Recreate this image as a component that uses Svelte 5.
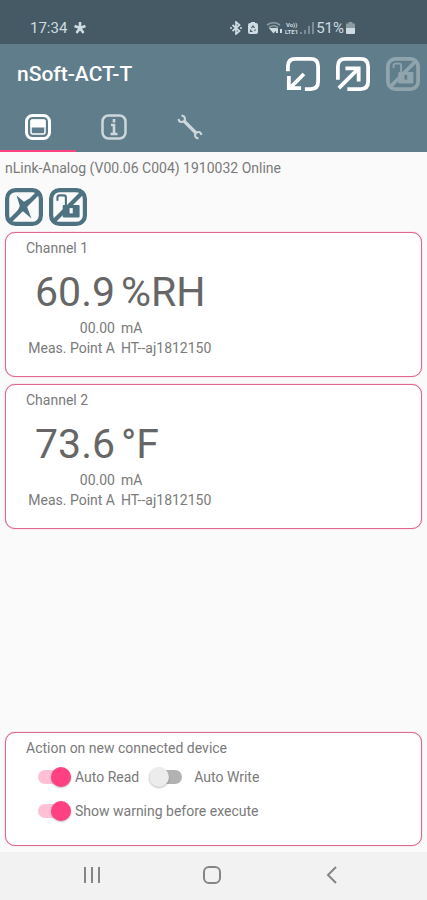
<script>
  let tab = $state('channels');
  let autoRead = $state(true);
  let autoWrite = $state(false);
  let showWarning = $state(true);

  const channels = [
    { name: 'Channel 1', value: '60.9', unit: '%RH' },
    { name: 'Channel 2', value: '73.6', unit: '°F' }
  ];
</script>

{#snippet lockOff()}
  <rect x="2" y="2" width="32" height="32" rx="8" stroke-width="4" />
  <path d="M4 32 32 4" stroke-width="4" />
  <path d="M8 12V9q0-2 2-2h4q2 0 2 2v8" stroke-width="2" />
  <rect x="13" y="16" width="16" height="12" rx="1" fill="currentColor" stroke="none" />
  <path class="keyhole" d="M21 19v5" stroke-width="3" />
{/snippet}

<div class="screen">
  <div class="status">
    <time>17:34</time>
    <svg width="14" height="14" viewBox="0 0 14 14" fill="none" stroke="currentColor" stroke-width="2.600">
      <path d="M7 7V1M7 7l5.500-2M7 7l3.500 5M7 7l-3.500 5M7 7 1.500 5" />
    </svg>
    <div class="tray">
      <svg width="12" height="14" viewBox="0 0 12 14" fill="none" stroke="currentColor" stroke-width="1.700">
        <path d="m2.500 4 7 6L6 13V1l3.500 3-7 6M0 7h2M10 7h2" />
      </svg>
      <svg class="saver" width="10" height="14" viewBox="0 0 10 14">
        <path d="M3 1h4v1h1q2 0 2 2v7q0 2-2 2H2q-2 0-2-2V4q0-2 2-2h1z" fill="currentColor" />
        <path d="M3.500 7 5 5l1.500 2M7.500 8.500 6.500 10M4.500 10.500h-2l.5-2" fill="none" stroke="#455a64" stroke-width="1.200" />
      </svg>
      <svg width="17" height="14" viewBox="0 0 17 14" fill="none" stroke="currentColor">
        <path d="M1 4q6.500-4.500 13 0M3 6.500q4.500-3.500 9 0" stroke-width="1.600" opacity=".5" />
        <path d="m5 8 2.500 3L10 8zM11 12V8M15 8v4" stroke-width="2" />
      </svg>
      <span class="lte"><span>Vo))</span><span>LTE1</span></span>
      <svg width="14" height="14" viewBox="0 0 14 14" fill="none" stroke="currentColor" stroke-width="1.600" opacity=".5">
        <path d="M1 13v-2M5 13V9M9 13V5M13 13V1" />
      </svg>
      <span>51%</span>
      <svg width="9" height="14" viewBox="0 0 9 14">
        <path d="M2.500 1h4v1.500H9V7H0V2.500h2.500z" fill="currentColor" opacity=".5" />
        <path d="M0 7h9v5q0 1-1 1H1q-1 0-1-1z" fill="currentColor" />
      </svg>
    </div>
  </div>

  <header>
    <div class="toolbar">
      <h1>nSoft-ACT-T</h1>
      <button aria-label="Read from device">
        <svg width="34" height="34" viewBox="0 0 36 36" fill="none" stroke="currentColor" stroke-width="4">
          <path d="M2 15v-5q0-8 8-8h16q8 0 8 8v16q0 8-8 8h-6" />
          <path d="M19 18 5 32M3 20v13h13" />
        </svg>
      </button>
      <button aria-label="Write to device">
        <svg width="34" height="34" viewBox="0 0 36 36" fill="none" stroke="currentColor" stroke-width="4">
          <path d="M2 24V10q0-8 8-8h16q8 0 8 8v16q0 8-8 8H12" />
          <path d="M3 33 24 12M10 12h14v14" />
        </svg>
      </button>
      <button class="locked" aria-label="Lock" disabled>
        <svg width="34" height="34" viewBox="0 0 36 36" fill="none" stroke="currentColor">
          {@render lockOff()}
        </svg>
      </button>
    </div>
    <nav class="tabs">
      <button class:active={tab === 'channels'} aria-label="Channels" onclick={() => (tab = 'channels')}>
        <svg width="26" height="26" viewBox="0 0 26 26" fill="none" stroke="currentColor">
          <rect x="1.500" y="1.500" width="23" height="23" rx="6" stroke-width="3" />
          <rect x="6" y="6" width="14" height="14" rx="2" stroke-width="1.500" />
          <path d="M6 6h14v7H6z" fill="currentColor" />
        </svg>
      </button>
      <button class:active={tab === 'info'} aria-label="Information" onclick={() => (tab = 'info')}>
        <svg width="26" height="26" viewBox="0 0 26 26" fill="none" stroke="currentColor">
          <rect x="1.500" y="1.500" width="23" height="23" rx="6" stroke-width="2.500" />
          <path d="M13 5v3.500M10 11h3v9M9.500 20h7" stroke-width="2.600" />
        </svg>
      </button>
      <button class:active={tab === 'service'} aria-label="Service" onclick={() => (tab = 'service')}>
        <svg width="26" height="26" viewBox="0 0 26 26" fill="none" stroke="currentColor">
          <path d="m7 7 12 12" stroke-width="3.200" />
          <path d="M4.500 1.500q3.500.5 3.500 3.500-.500 3-3.500 3Q2 8 1.500 5M21.500 24.500q-3.500-.5-3.500-3.500.5-3 3.500-3 2.500 0 3 3" stroke-width="2" />
        </svg>
      </button>
    </nav>
  </header>

  <main>
    <p>nLink-Analog (V00.06 C004) 1910032 Online</p>
    <div class="actions">
      <button aria-label="Disconnect">
        <svg width="38" height="38" viewBox="0 0 36 36" fill="none" stroke="currentColor">
          <rect x="2" y="2" width="32" height="32" rx="8" stroke-width="4" />
          <path d="M4 32 32 4" stroke-width="4" />
          <path d="m11 7 7 6 5-3-2 8 4 11-8-7-6 2 3-7z" fill="currentColor" stroke="none" />
        </svg>
      </button>
      <button aria-label="Unlock">
        <svg width="38" height="38" viewBox="0 0 36 36" fill="none" stroke="currentColor">
          {@render lockOff()}
        </svg>
      </button>
    </div>

    {#each channels as channel}
      <section class="card">
        <h2>{channel.name}</h2>
        <div class="reading">
          <span class="big">{channel.value}</span>
          <span class="big">{channel.unit}</span>
          <span>00.00</span>
          <span>mA</span>
          <span>Meas. Point A</span>
          <span>HT--aj1812150</span>
        </div>
      </section>
    {/each}

    <section class="card settings">
      <h2>Action on new connected device</h2>
      <div class="row">
        <label><input type="checkbox" role="switch" bind:checked={autoRead} />Auto Read</label>
        <label class="wide"><input type="checkbox" role="switch" bind:checked={autoWrite} />Auto Write</label>
      </div>
      <div class="row">
        <label><input type="checkbox" role="switch" bind:checked={showWarning} />Show warning before execute</label>
      </div>
    </section>
  </main>

  <footer>
    <button aria-label="Recent apps">
      <svg width="20" height="20" viewBox="0 0 20 20" fill="none" stroke="currentColor" stroke-width="2"><path d="M3 2v16M10 2v16M17 2v16" /></svg>
    </button>
    <button aria-label="Home">
      <svg width="20" height="20" viewBox="0 0 20 20" fill="none" stroke="currentColor" stroke-width="2"><rect x="2" y="2" width="16" height="16" rx="5" /></svg>
    </button>
    <button aria-label="Back">
      <svg width="20" height="20" viewBox="0 0 20 20" fill="none" stroke="currentColor" stroke-width="2"><path d="m14 2-8 8 8 8" /></svg>
    </button>
  </footer>
</div>

<style>
  :global(body) {
    margin: 0;
    background: #fafafa;
  }

  .screen {
    display: flex;
    flex-direction: column;
    min-height: 100vh;
    font: 14px/20px Roboto, sans-serif;
    color: #7a7a7a;
  }

  svg {
    display: block;
    flex: none;
  }

  button {
    display: flex;
    align-items: center;
    justify-content: center;
    margin: 0;
    padding: 0;
    border: 0;
    background: none;
    color: inherit;
    font: inherit;
  }

  h1,
  h2,
  p {
    margin: 0;
    font-weight: 400;
  }

  .status {
    display: flex;
    align-items: center;
    gap: 6px;
    height: 32px;
    padding: 12px 72px 0 30px;
    background: #455a64;
    color: #cfdbe2;
    font-size: 15px;
  }

  .tray {
    display: flex;
    align-items: center;
    gap: 2px;
    margin-left: auto;
  }

  .saver {
    margin: 0 6px 0 4px;
  }

  .lte {
    display: flex;
    flex-direction: column;
    align-items: center;
    font-size: 6px;
    font-weight: 700;
    line-height: 7px;
  }

  header {
    background: #607d8b;
    color: #fff;
  }

  .toolbar {
    display: flex;
    align-items: center;
    gap: 16px;
    height: 60px;
    padding: 0 7px 0 17px;
  }

  h1 {
    flex: 1;
    font-size: 21px;
    line-height: 28px;
    font-weight: 500;
  }

  .locked {
    color: #90a4ae;
  }

  .keyhole {
    stroke: #607d8b;
  }

  .actions .keyhole {
    stroke: #fafafa;
  }

  .tabs {
    display: flex;
  }

  .tabs button {
    width: 76px;
    height: 48px;
    border-bottom: 2px solid transparent;
    color: #cdd7dc;
  }

  .tabs .active {
    border-color: #ff4081;
    color: #fff;
  }

  main {
    display: flex;
    flex: 1;
    flex-direction: column;
    gap: 7px;
    padding: 6px 5px;
  }

  .actions {
    display: flex;
    gap: 6px;
    margin: 3px 0 -1px;
    color: #4f7282;
  }

  .card {
    padding: 5px 20px 18px;
    border: 1px solid #e0678f;
    border-radius: 10px;
    background: #fff;
    box-shadow: 0 0 1px #e0678f;
  }

  h2 {
    font-size: 14px;
  }

  .reading {
    display: grid;
    grid-template-columns: minmax(89px, max-content) 1fr;
    column-gap: 6px;
    margin-top: 8px;
  }

  .reading span:nth-child(odd) {
    text-align: right;
  }

  .reading .big {
    font-size: 41px;
    line-height: 52px;
    color: #666;
  }

  .settings {
    margin-top: auto;
    padding-bottom: 17px;
  }

  .settings h2 {
    margin-bottom: 2px;
  }

  .row {
    display: flex;
    gap: 10px;
    padding: 7px 0 7px 12px;
  }

  label {
    display: flex;
    align-items: center;
    gap: 4px;
  }

  label.wide {
    gap: 12px;
  }

  input {
    position: relative;
    display: flex;
    align-items: center;
    width: 33px;
    height: 20px;
    margin: 0;
    appearance: none;
  }

  input::before {
    content: '';
    width: 33px;
    height: 14px;
    border-radius: 7px;
    background: #b2b2b2;
  }

  input::after {
    content: '';
    position: absolute;
    left: 0;
    width: 20px;
    height: 20px;
    border-radius: 50%;
    background: #ececec;
    box-shadow: 0 1px 2px #0004;
  }

  input:checked::before {
    background: #ffc0d5;
  }

  input:checked::after {
    right: 0;
    left: auto;
    background: #ff4081;
  }

  footer {
    display: flex;
    align-items: center;
    justify-content: center;
    gap: 100px;
    height: 46px;
    padding: 0 4px 2px 0;
    background: #f2f2f2;
    color: #858585;
  }
</style>
